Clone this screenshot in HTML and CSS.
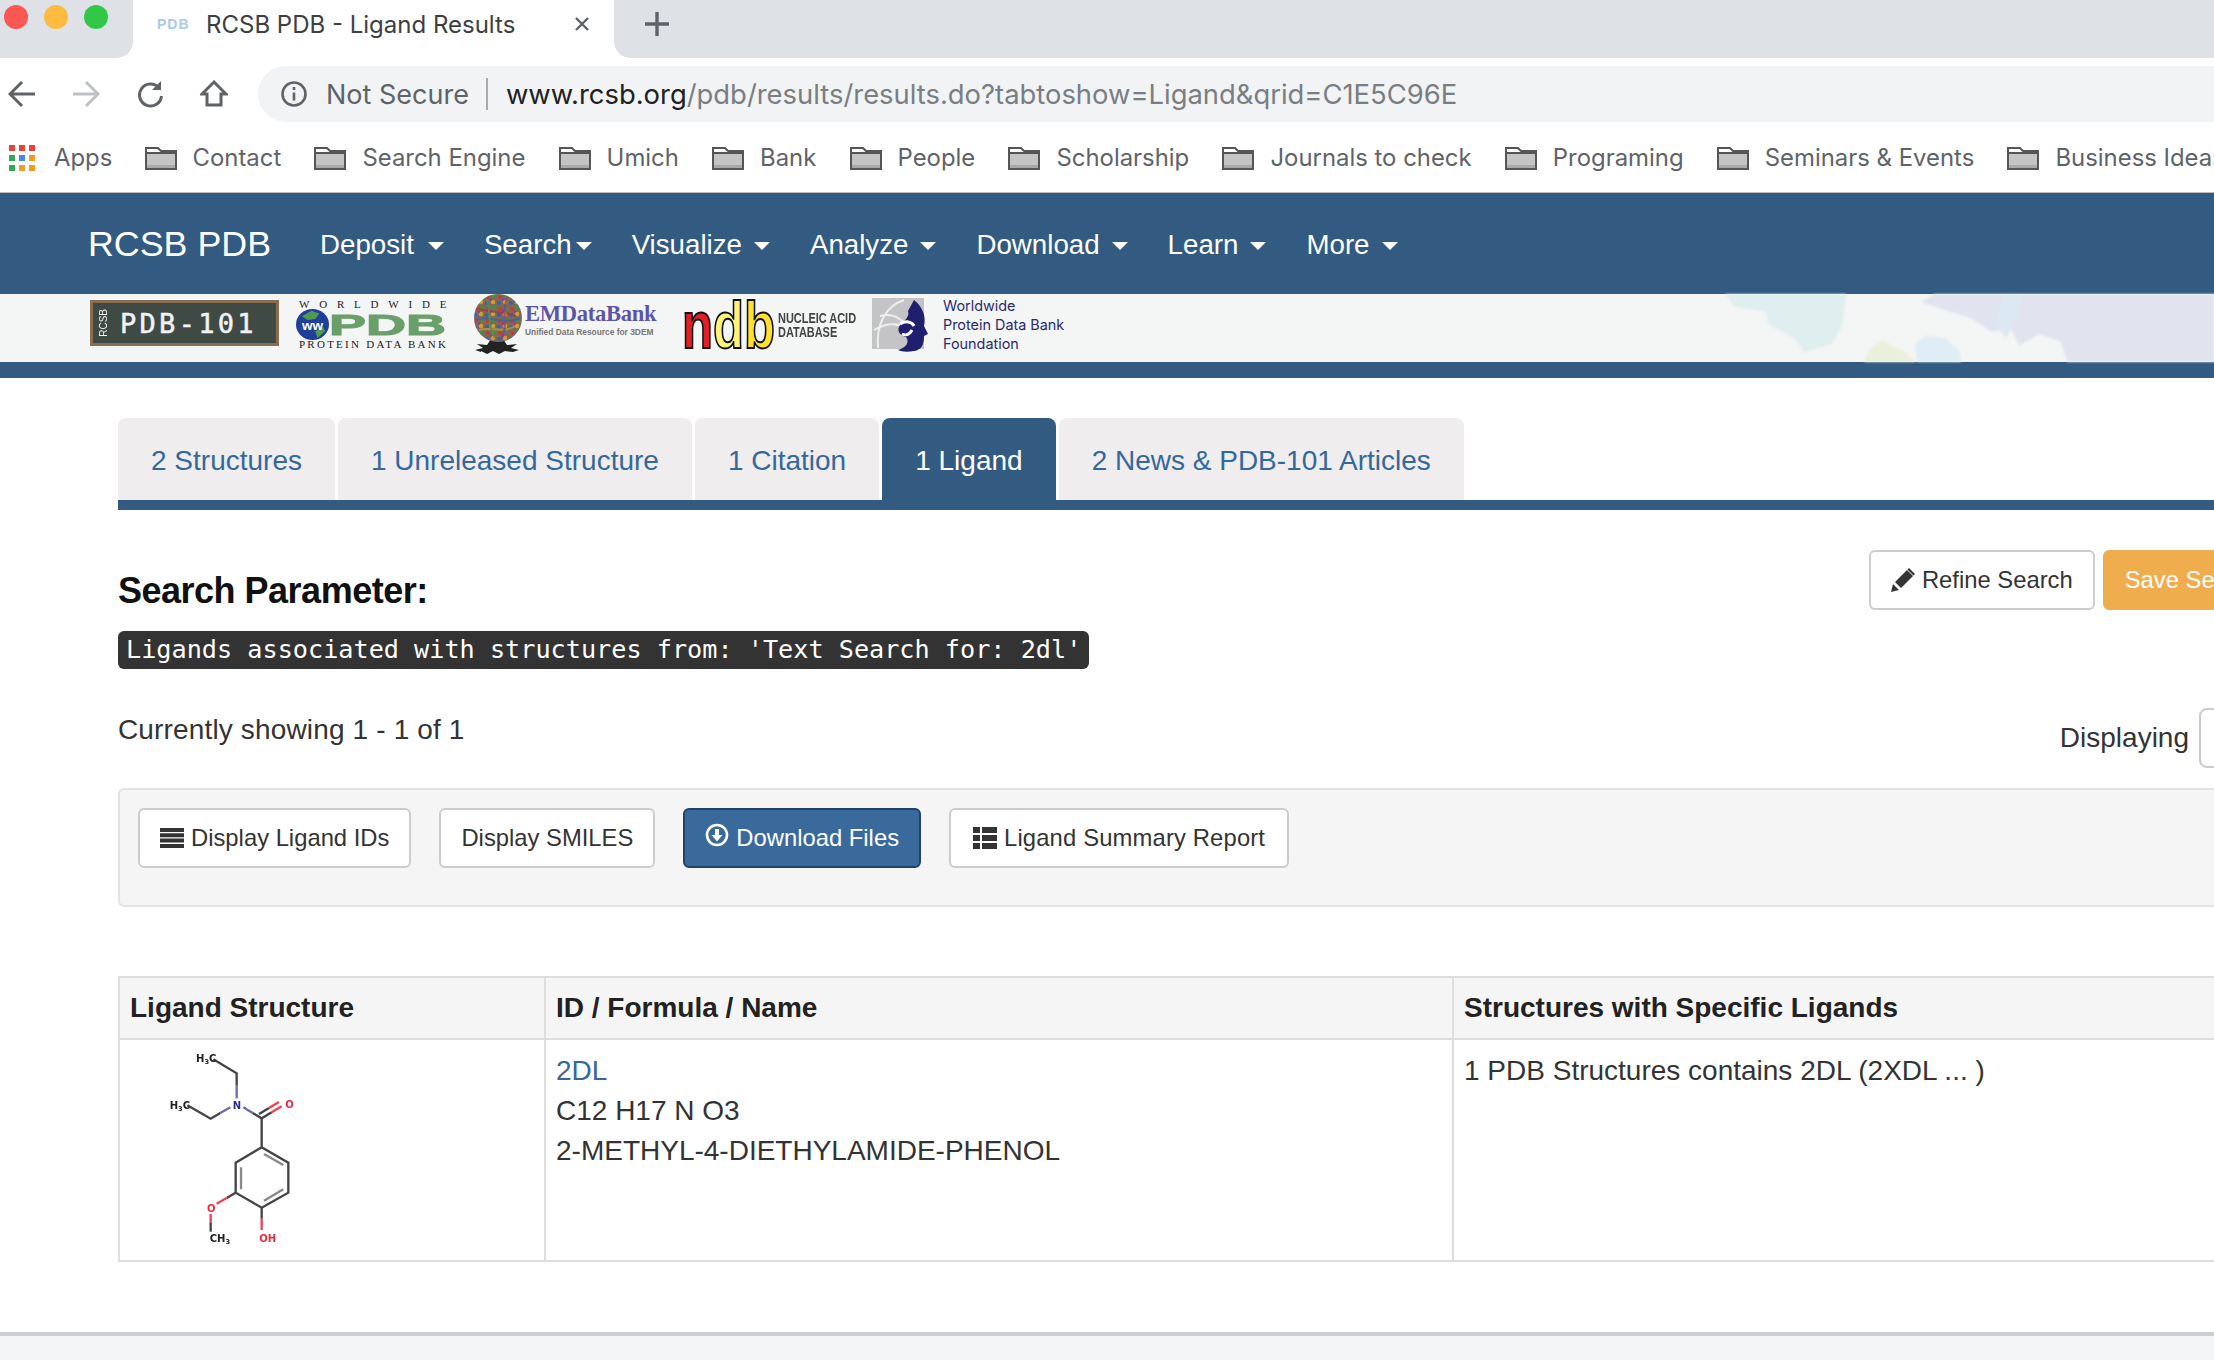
FILE: index.html
```html
<!DOCTYPE html>
<html lang="en">
<head>
    <meta charset="UTF-8">
    <title>RCSB PDB - Ligand Results</title>
    <link rel="stylesheet" href="styles.css">
</head>
<body>
    <!-- browser chrome -->
    <div class="tabstrip">
        <div class="lights">
            <span class="light red"></span>
            <span class="light yellow"></span>
            <span class="light green"></span>
        </div>
        <div class="browser-tab">
            <span class="favicon">PDB</span>
            <span class="browser-tab-title">RCSB PDB - Ligand Results</span>
            <svg class="tab-close" width="16" height="16" viewBox="0 0 16 16"><path d="M2 2l12 12M14 2L2 14" stroke="#5f6368" stroke-width="2.4"/></svg>
        </div>
        <svg class="tab-new" width="24" height="24" viewBox="0 0 24 24"><path d="M12 0v24M0 12h24" stroke="#5f6368" stroke-width="3.4"/></svg>
    </div>

    <div class="toolbar">
        <div class="toolbar-icons">
            <svg width="28" height="28" viewBox="0 0 28 28" fill="none" stroke="#5f6368" stroke-width="3"><path d="M27 14H3M14 2L2 14l12 12"/></svg>
            <svg width="28" height="28" viewBox="0 0 28 28" fill="none" stroke="#bdc1c6" stroke-width="3"><path d="M1 14h24M14 2l12 12-12 12"/></svg>
            <svg width="28" height="28" viewBox="0 0 28 28" fill="none" stroke="#5f6368" stroke-width="3"><path d="M23 8a11 11 0 1 0 2.5 8"/><path d="M25 1v9h-9" fill="#5f6368" stroke="none"/></svg>
            <svg width="28" height="28" viewBox="0 0 28 28" fill="none" stroke="#5f6368" stroke-width="3"><path d="M14 2L2 14h5v11h14V14h5z"/></svg>
        </div>
        <div class="omnibox">
            <svg class="info-icon" width="28" height="28" viewBox="0 0 28 28" fill="none" stroke="#5f6368" stroke-width="2.6"><circle cx="14" cy="14" r="11.5"/><path d="M14 12.500v8M14 7v3"/></svg>
            <span class="not-secure">Not Secure</span>
            <span class="omni-divider"></span>
            <span class="url"><b>www.rcsb.org</b>/pdb/results/results.do?tabtoshow=Ligand&amp;qrid=C1E5C96E</span>
        </div>
    </div>

    <div class="bookmarks">
        <div class="bookmark apps">
            <span class="apps-grid">
                <i class="r"></i><i class="r"></i><i class="r"></i>
                <i class="g"></i><i class="b"></i><i class="o"></i>
                <i class="g"></i><i class="o"></i><i class="o"></i>
            </span>
            Apps
        </div>
        <div class="bookmark"><svg class="folder"><use href="#folder"/></svg>Contact</div>
        <div class="bookmark"><svg class="folder"><use href="#folder"/></svg>Search Engine</div>
        <div class="bookmark"><svg class="folder"><use href="#folder"/></svg>Umich</div>
        <div class="bookmark"><svg class="folder"><use href="#folder"/></svg>Bank</div>
        <div class="bookmark"><svg class="folder"><use href="#folder"/></svg>People</div>
        <div class="bookmark"><svg class="folder"><use href="#folder"/></svg>Scholarship</div>
        <div class="bookmark"><svg class="folder"><use href="#folder"/></svg>Journals to check</div>
        <div class="bookmark"><svg class="folder"><use href="#folder"/></svg>Programing</div>
        <div class="bookmark"><svg class="folder"><use href="#folder"/></svg>Seminars &amp; Events</div>
        <div class="bookmark"><svg class="folder"><use href="#folder"/></svg>Business Ideas</div>
    </div>

    <svg class="defs" width="0" height="0">
        <symbol id="folder" viewBox="0 0 32 24">
            <path d="M1 23V2h12l3 3h15v18z" fill="#fff" stroke="#555" stroke-width="2"/>
            <rect x="2" y="8" width="28" height="14" fill="#c4c4c4"/>
            <rect x="1" y="6" width="30" height="2" fill="#555"/>
            <rect x="2" y="19" width="28" height="3" fill="#a9a9a9"/>
        </symbol>
        <pattern id="em-dots" width="12" height="12" patternUnits="userSpaceOnUse">
            <rect width="12" height="12" fill="#7d6a55"/>
            <circle cx="3" cy="3" r="2" fill="#c23a3a"/>
            <circle cx="9" cy="2" r="2" fill="#3f8f4f"/>
            <circle cx="2" cy="9" r="2" fill="#3b5fb0"/>
            <circle cx="8" cy="8" r="2.200" fill="#d99a2b"/>
            <circle cx="6" cy="5.500" r="1.200" fill="#8a3a9a"/>
        </pattern>
    </svg>

    <!-- site header -->
    <nav class="site-nav">
        <a class="brand">RCSB PDB</a>
        <a class="nav-link">Deposit<span class="caret"></span></a>
        <a class="nav-link tight">Search<span class="caret"></span></a>
        <a class="nav-link">Visualize<span class="caret"></span></a>
        <a class="nav-link">Analyze<span class="caret"></span></a>
        <a class="nav-link">Download<span class="caret"></span></a>
        <a class="nav-link">Learn<span class="caret"></span></a>
        <a class="nav-link">More<span class="caret"></span></a>
    </nav>

    <div class="banner">
        <svg class="banner-art" width="510" height="68" viewBox="0 0 510 68">
            <path d="M21 0H142L138 32L128 50L100 58L90 44L64 30L62 18L30 12Z" fill="#dfeeee"/>
            <path d="M160 68l6-14 12-8 10 6 10 4 14 12z" fill="#ebf0dc"/>
            <path d="M213 68l-2-18 10-8 20 2 14 12 2 12z" fill="#dfedf6"/>
            <path d="M231 0h279v68H363l-6-20-22-8-20 12-8-18-20 4-20-14-20-6-30-10z" fill="#e1e4ef"/>
            <path d="M300 0h18l-4 24-12 20-10-12z" fill="#dde9f2"/>
        </svg>
        <div class="logo-chalk"><span class="chalk-side">RCSB</span><span class="chalk-text">PDB-101</span></div>
        <div class="logo-ww">
            <div class="ww-top">WORLDWIDE</div>
            <div class="ww-mid">
                <svg width="33" height="31" viewBox="0 0 34 34" preserveAspectRatio="none"><circle cx="17" cy="17" r="17" fill="#1f3f9a"/><path d="M6 8l10-6 8 3-4 6-8 1zM20 24l8-4 2 4-8 8z" fill="#4f9a4f"/><text x="17" y="23" text-anchor="middle" class="ww-globe">ww</text></svg>
                <span class="ww-pdb">PDB</span>
            </div>
            <div class="ww-bottom">PROTEIN DATA BANK</div>
        </div>
        <div class="logo-em">
            <svg width="50" height="61" viewBox="0 0 50 61">
                <path d="M8 58l-6-2 8-2-6-4 10 1 4-6h12l4 6 10-1-6 4 8 2-6 2-8-1-6 3-6-3-6 3-6-3z" fill="#222"/>
                <ellipse cx="25" cy="24" rx="24" ry="24" fill="url(#em-dots)"/>
                <g fill="none" stroke-width="2" opacity="0.700">
                    <path d="M5 14c10 6 26 2 38 8" stroke="#a33"/>
                    <path d="M3 26c12-6 28 6 44-2" stroke="#3a5fa8"/>
                    <path d="M6 36c10-4 24 4 36-4" stroke="#c9a227"/>
                    <path d="M14 6c4 12 0 26 8 38" stroke="#4a9a4a"/>
                    <path d="M34 4c-6 14 2 28-6 42" stroke="#8a3a9a"/>
                </g>
            </svg>
            <div class="em-text">
                <div class="em-name">EMDataBank</div>
                <div class="em-sub">Unified Data Resource for 3DEM</div>
            </div>
        </div>
        <div class="logo-ndb">
            <span class="ndb-letters"><i class="ndb-n">n</i><i class="ndb-d">d</i><i class="ndb-b">b</i></span>
            <span class="ndb-text">NUCLEIC ACID<br>DATABASE</span>
        </div>
        <div class="logo-found">
            <svg width="58" height="55" viewBox="0 0 58 55">
                <rect x="0" y="0" width="52" height="51" fill="#c4c4c6"/>
                <path d="M6 50C4 26 14 8 32 2M8 18c14-4 26 4 32 20M2 32c10-6 22-8 34-2" fill="none" stroke="#eee" stroke-width="2"/>
                <path d="M42 2c10 8 12 18 10 26l4 8-4 2c0 8-2 14-10 15-6 1-12 1-16-1 8-2 12-8 8-13-6-2-10-6-6-12 4-4 10-8 8-14z" fill="#1f1f6e"/>
                <path d="M28 26c6-4 12-2 14 2M30 36c4 2 8 0 10-4" fill="none" stroke="#fff" stroke-width="3"/>
            </svg>
            <div class="found-text">Worldwide<br>Protein Data Bank<br>Foundation</div>
        </div>
    </div>
    <div class="banner-rule"></div>

    <!-- results -->
    <div class="content">
        <ul class="result-tabs">
            <li>2 Structures</li>
            <li>1 Unreleased Structure</li>
            <li>1 Citation</li>
            <li class="active">1 Ligand</li>
            <li>2 News &amp; PDB-101 Articles</li>
        </ul>

        <div class="param-row">
            <div>
                <h4>Search Parameter:</h4>
                <code class="query">Ligands associated with structures from: 'Text Search for: 2dl'</code>
            </div>
            <div class="param-actions">
                <button class="btn">
                    <svg class="gl" width="24" height="24" viewBox="0 0 24 24"><path d="M0 24l2-8 6 6zM4 14L16 2l6 6L10 20zM18 0l6 6-1.500 1.500-6-6z" fill="#333"/></svg>
                    Refine Search
                </button>
                <button class="btn btn-save">Save Search</button>
            </div>
        </div>

        <div class="showing-row">
            <span class="showing">Currently showing 1 - 1 of 1</span>
            <div class="displaying">
                <span>Displaying</span>
                <span class="per-page"></span>
            </div>
        </div>

        <div class="well">
            <button class="btn">
                <svg class="gl" width="24" height="20" viewBox="0 0 24 20"><path d="M0 0h24v4H0zM0 5.300h24v4H0zM0 10.600h24v4H0zM0 16h24v4H0z" fill="#333"/></svg>
                Display Ligand IDs
            </button>
            <button class="btn">Display SMILES</button>
            <button class="btn btn-primary">
                <svg class="gl dl" width="24" height="24" viewBox="0 0 24 24" fill="none" stroke="#fff" stroke-width="2.6"><circle cx="12" cy="12" r="10"/><path d="M12 6v7" stroke-width="4"/><path d="M6.500 12h11L12 18.500z" fill="#fff" stroke="none"/></svg>
                Download Files
            </button>
            <button class="btn btn-report">
                <svg class="gl" width="24" height="22" viewBox="0 0 24 22"><path d="M0 0h7v6H0zM9 0h15v6H9zM0 8h7v6H0zM9 8h15v6H9zM0 16h7v6H0zM9 16h15v6H9z" fill="#333"/></svg>
                Ligand Summary Report
            </button>
        </div>

        <table class="ligands">
            <thead>
                <tr>
                    <th class="col-structure">Ligand Structure</th>
                    <th class="col-name">ID / Formula / Name</th>
                    <th>Structures with Specific Ligands</th>
                </tr>
            </thead>
            <tbody>
                <tr>
                    <td class="cell-mol">
                        <svg class="molecule" width="220" height="220" viewBox="120 30 660 660">
                            <g fill="none" stroke-width="7">
                                <path d="M400 88l70 42v35" stroke="#444"/>
                                <path d="M470 165v40" stroke="#6a6ab5"/>
                                <path d="M322 226l70 40 29-17" stroke="#444"/>
                                <path d="M421 249l30-17M490 232l28 17" stroke="#6a6ab5"/>
                                <path d="M518 249l27 16 30-18M537 252l30-18" stroke="#444"/>
                                <path d="M575 247l30-18M567 234l30-18" stroke="#f04050"/>
                                <path d="M545 265v87l80 46v90l-80 45-78-45v-90l78-46" stroke="#444"/>
                                <path d="M552 372l58 33M610 478l-58 34M483 412v66" stroke="#888"/>
                                <path d="M467 488l-27 16" stroke="#444"/>
                                <path d="M440 504l-30 17" stroke="#f04050"/>
                                <path d="M392 552v25" stroke="#f04050"/>
                                <path d="M392 577v28" stroke="#444"/>
                                <path d="M545 533v33" stroke="#444"/>
                                <path d="M545 566v34" stroke="#f04050"/>
                            </g>
                            <g class="atom">
                                <text x="348" y="97">H<tspan class="atom-sub" dy="6">3</tspan><tspan dy="-6">C</tspan></text>
                                <text x="269" y="237">H<tspan class="atom-sub" dy="6">3</tspan><tspan dy="-6">C</tspan></text>
                                <text x="458" y="236" class="atom-n">N</text>
                                <text x="616" y="234" class="atom-o">O</text>
                                <text x="381" y="546" class="atom-o">O</text>
                                <text x="389" y="636">CH<tspan class="atom-sub" dy="6">3</tspan></text>
                                <text x="538" y="636" class="atom-o">OH</text>
                            </g>
                        </svg>
                    </td>
                    <td class="cell-name">
                        <a class="lig-link">2DL</a><br>
                        C12 H17 N O3<br>
                        2-METHYL-4-DIETHYLAMIDE-PHENOL
                    </td>
                    <td class="cell-name">1 PDB Structures contains 2DL (2XDL ... )</td>
                </tr>
            </tbody>
        </table>
    </div>

    <footer class="site-footer"></footer>
</body>
</html>
```

FILE: styles.css
```css
:root {
    --rcsb-blue: #335a80;
    --link-blue: #35689a;
    --text-color: #333;
    --chrome-font: "Inter", "Roboto", sans-serif;
    --page-font: "Liberation Sans", Arial, sans-serif;
}
html, body {
    margin: 0;
    padding: 0;
    height: 1360px;
    overflow: hidden;
}
body {
    font-family: var(--page-font);
    font-size: 28px;
    color: var(--text-color);
    background-color: #fff;
    display: flex;
    flex-direction: column;
}

/* browser chrome */
.tabstrip {
    height: 58px;
    flex: none;
    background-color: #dee1e6;
    display: flex;
    align-items: flex-start;
}
.lights {
    width: 133px;
    display: flex;
    gap: 16px;
    padding: 5px 0 0 4px;
    box-sizing: border-box;
}
.light {
    width: 24px;
    height: 24px;
    border-radius: 50%;
}
.light.red { background-color: #fc5753; }
.light.yellow { background-color: #fdbc40; }
.light.green { background-color: #33c748; }
.browser-tab {
    position: relative;
    width: 481px;
    height: 58px;
    box-sizing: border-box;
    background-color: #fff;
    display: flex;
    align-items: center;
    padding: 0 24px 10px 24px;
}
.browser-tab::before, .browser-tab::after {
    content: "";
    position: absolute;
    bottom: 0;
    width: 16px;
    height: 16px;
}
.browser-tab::before {
    left: -16px;
    background: radial-gradient(circle at 0 0, transparent 15.500px, #fff 16px);
}
.browser-tab::after {
    right: -16px;
    background: radial-gradient(circle at 100% 0, transparent 15.500px, #fff 16px);
}
.favicon {
    width: 32px;
    font-size: 14px;
    font-weight: bold;
    letter-spacing: 1px;
    color: #a9cbe8;
    margin-right: 17px;
}
.browser-tab-title {
    font-family: var(--chrome-font);
    font-size: 24px;
    color: #3c4043;
    flex: 1;
    white-space: nowrap;
}
.tab-new {
    margin: 12px 0 0 31px;
}
.toolbar {
    height: 70px;
    flex: none;
    display: flex;
    align-items: center;
    padding-top: 2px;
    box-sizing: border-box;
}
.toolbar-icons {
    width: 258px;
    box-sizing: border-box;
    padding-left: 8px;
    display: flex;
    gap: 36px;
}
.omnibox {
    flex: 1;
    height: 56px;
    background-color: #f1f3f4;
    border-radius: 28px 0 0 28px;
    display: flex;
    align-items: center;
    padding-left: 22px;
    font-family: var(--chrome-font);
    font-size: 27px;
}
.not-secure {
    color: #5f6368;
    margin-left: 18px;
}
.omni-divider {
    width: 2px;
    height: 32px;
    background-color: #a8abaf;
    margin: 0 18px 0 17px;
}
.url {
    color: #7a7e83;
    font-size: 27.400px;
    white-space: nowrap;
}
.url b {
    font-weight: 400;
    color: #202124;
}
.bookmarks {
    height: 59px;
    padding: 0 0 5px 9px;
    flex: none;
    display: flex;
    align-items: center;
    gap: 33.200px;
    font-family: var(--chrome-font);
    font-size: 23.900px;
    color: #5f6368;
    white-space: nowrap;
    border-bottom: 1px solid #b9bcc0;
    box-sizing: content-box;
}
.bookmark {
    display: flex;
    align-items: center;
    gap: 16px;
}
.apps {
    gap: 19px;
    margin-right: -1px;
}
.apps-grid {
    width: 26px;
    display: grid;
    grid-template-columns: repeat(3, 6px);
    grid-auto-rows: 6px;
    gap: 4px;
}
.apps-grid i.r { background-color: #ea4335; }
.apps-grid i.g { background-color: #34a853; }
.apps-grid i.b { background-color: #4285f4; }
.apps-grid i.o { background-color: #f29b1f; }
.folder {
    width: 32px;
    height: 24px;
}
.defs {
    position: absolute;
}

/* site nav */
.site-nav {
    height: 101px;
    padding: 2px 0 0 88px;
    box-sizing: border-box;
    flex: none;
    background-color: var(--rcsb-blue);
    color: #fff;
    display: flex;
    align-items: center;
    gap: 40px;
}
.brand {
    font-size: 35.800px;
    margin-right: 9px;
}
.nav-link {
    font-size: 27.700px;
    display: flex;
    align-items: center;
}
.caret {
    width: 0;
    height: 0;
    margin-left: 12px;
    margin-top: 3px;
    border-top: 8px solid #fff;
    border-left: 8px solid transparent;
    border-right: 8px solid transparent;
}
.brand + .nav-link .caret {
    margin-left: 14px;
}
.nav-link.tight .caret {
    margin-left: 4px;
}

/* partner logo banner */
.banner {
    height: 68px;
    flex: none;
    position: relative;
    background-color: #f4f5f5;
    display: flex;
    align-items: flex-start;
    padding-left: 90px;
}
.banner-art {
    position: absolute;
    right: 0;
    top: 0;
    filter: blur(1px);
}
.banner-rule {
    height: 16px;
    flex: none;
    background-color: var(--rcsb-blue);
}
.logo-chalk {
    width: 189px;
    height: 46px;
    box-sizing: border-box;
    margin: 6px 17px 0 0;
    background-color: #3f4a45;
    border: 3px solid #8a6d4f;
    color: #f2f2f2;
    display: flex;
    align-items: center;
    flex: none;
}
.chalk-side {
    font-size: 10px;
    writing-mode: vertical-rl;
    transform: rotate(180deg);
    margin: 0 11px 0 5px;
}
.chalk-text {
    font-family: "DejaVu Sans Mono", monospace;
    font-size: 27px;
    letter-spacing: 3.300px;
    -webkit-text-stroke: 0.500px #f2f2f2;
    white-space: nowrap;
}
.logo-ww {
    width: 152px;
    flex: none;
    margin: 6px 25px 0 0;
    font-family: "Liberation Serif", serif;
    color: #222;
}
.ww-top {
    font-size: 11px;
    line-height: 9px;
    letter-spacing: 9.800px;
    padding-left: 3px;
    white-space: nowrap;
}
.ww-mid {
    display: flex;
    align-items: center;
    height: 31px;
}
.ww-mid svg {
    flex: none;
}
.ww-globe {
    font-family: var(--page-font);
    font-size: 14px;
    font-weight: bold;
    fill: #fff;
}
.ww-pdb {
    font-family: var(--page-font);
    font-size: 30px;
    line-height: 31px;
    font-weight: bold;
    color: #6a9f6a;
    -webkit-text-stroke: 1px #6a9f6a;
    transform: scaleX(1.850);
    transform-origin: left center;
    white-space: nowrap;
}
.ww-bottom {
    font-size: 11px;
    line-height: 9px;
    letter-spacing: 2.250px;
    padding-left: 3px;
    white-space: nowrap;
}
.logo-em {
    display: flex;
    align-items: flex-start;
    flex: none;
    width: 184px;
    margin-right: 25px;
}
.logo-em svg {
    flex: none;
}
.em-text {
    margin: 6px 0 0 2px;
}
.em-name {
    font-family: "Liberation Serif", serif;
    font-size: 22.600px;
    font-weight: bold;
    line-height: 27px;
    color: #5a55a8;
    letter-spacing: -0.300px;
    white-space: nowrap;
}
.em-sub {
    font-size: 8.400px;
    line-height: 11px;
    font-weight: bold;
    color: #777;
    white-space: nowrap;
}
.logo-ndb {
    display: flex;
    align-items: center;
    flex: none;
    width: 176px;
    height: 50px;
    margin: 6px 14px 0 0;
}
.ndb-letters {
    width: 93px;
    flex: none;
    font-size: 66px;
    line-height: 50px;
    font-weight: bold;
    -webkit-text-stroke: 2px #111;
    transform: scaleX(0.770);
    transform-origin: left center;
    white-space: nowrap;
}
.ndb-letters i {
    font-style: normal;
}
.ndb-n { color: #e01f26; }
.ndb-d { color: #fff27a; }
.ndb-b { color: #ffe02e; }
.ndb-text {
    font-size: 15px;
    line-height: 14px;
    font-weight: bold;
    color: #444;
    margin-left: 3px;
    white-space: nowrap;
    transform: scaleX(0.730);
    transform-origin: left center;
}
.logo-found {
    display: flex;
    align-items: flex-start;
    flex: none;
    margin-top: 4px;
}
.logo-found svg {
    flex: none;
}
.found-text {
    font-family: var(--chrome-font);
    font-size: 14.400px;
    line-height: 19px;
    color: #2b2a6e;
    margin: -2px 0 0 13px;
    white-space: nowrap;
}

/* results area */
.content {
    width: 2189px;
    flex: none;
    margin: 40px 0 0 118px;
}
.result-tabs {
    list-style: none;
    margin: 0;
    padding: 0;
    height: 82px;
    display: flex;
    gap: 3px;
    border-bottom: 10px solid var(--rcsb-blue);
}
.result-tabs li {
    background-color: #efedee;
    color: var(--link-blue);
    padding: 0 33px;
    height: 82px;
    line-height: 85px;
    border-radius: 8px 8px 0 0;
}
.result-tabs li.active {
    background-color: var(--rcsb-blue);
    color: #fff;
}
.param-row {
    display: flex;
    justify-content: space-between;
    align-items: flex-start;
    margin-top: 40px;
}
h4 {
    margin: 19px 0 0;
    font-size: 36px;
    line-height: 44px;
    font-weight: bold;
    color: #111;
    letter-spacing: -0.500px;
}
.query {
    display: inline-block;
    margin-top: 18px;
    height: 38px;
    padding: 0 8px;
    background-color: #333;
    color: #fff;
    border-radius: 6px;
    font-family: "DejaVu Sans Mono", monospace;
    font-size: 25.200px;
    line-height: 38px;
}
.param-actions {
    display: flex;
    gap: 8px;
    margin-right: 24px;
}
.btn {
    height: 60px;
    padding: 0 20px;
    font-family: var(--page-font);
    font-size: 23.800px;
    color: var(--text-color);
    background-color: #fff;
    border: 2px solid #ccc;
    border-radius: 6px;
    display: inline-flex;
    align-items: center;
    box-sizing: border-box;
    white-space: nowrap;
}
.btn-save {
    background-color: #f0ad4e;
    border-color: #f0ad4e;
    color: #fff;
}
.btn-primary {
    background-color: #3a6a9b;
    border-color: #1f4468;
    color: #fff;
}
.btn-report {
    padding: 0 22px;
    letter-spacing: 0.150px;
}
.gl {
    margin-right: 7px;
    flex: none;
}
.gl.dl {
    margin-top: -6px;
}
.showing-row {
    display: flex;
    justify-content: space-between;
    margin-top: 39px;
}
.showing {
    line-height: 40px;
    margin-top: 2px;
    letter-spacing: 0.150px;
}
.displaying {
    display: flex;
    align-items: center;
    gap: 10px;
}
.per-page {
    width: 108px;
    height: 60px;
    box-sizing: border-box;
    border: 2px solid #ccc;
    border-radius: 8px;
}
.well {
    height: 119px;
    box-sizing: border-box;
    margin-top: 20px;
    padding: 18px 18px;
    background-color: #f5f5f5;
    border: 2px solid #e3e3e3;
    border-radius: 6px;
    display: flex;
    align-items: flex-start;
    gap: 28px;
}
.ligands {
    width: 100%;
    margin-top: 69px;
    border-collapse: collapse;
    table-layout: fixed;
}
.ligands th, .ligands td {
    border: 2px solid #ddd;
    box-sizing: border-box;
    text-align: left;
    vertical-align: top;
}
.ligands th {
    background-color: #f5f5f5;
    height: 62px;
    padding: 0 10px;
    color: #222;
    vertical-align: middle;
}
.col-structure { width: 426px; }
.col-name { width: 908px; }
.cell-mol {
    padding: 0;
    height: 221px;
    line-height: 0;
}
.cell-name {
    padding: 11px 10px;
    line-height: 40px;
}
.lig-link {
    color: var(--link-blue);
}
.molecule {
    filter: blur(0.700px);
}
.atom text {
    font-family: "DejaVu Sans", sans-serif;
    font-size: 30px;
    font-weight: bold;
    fill: #222;
}
.atom .atom-sub {
    font-size: 20px;
}
.atom .atom-n { fill: #2a2a9a; }
.atom .atom-o { fill: #f0283c; }
.site-footer {
    position: absolute;
    left: 0;
    right: 0;
    top: 1332px;
    height: 28px;
    background-color: #f4f5f7;
    border-top: 4px solid #cdced1;
    box-sizing: border-box;
}
```
